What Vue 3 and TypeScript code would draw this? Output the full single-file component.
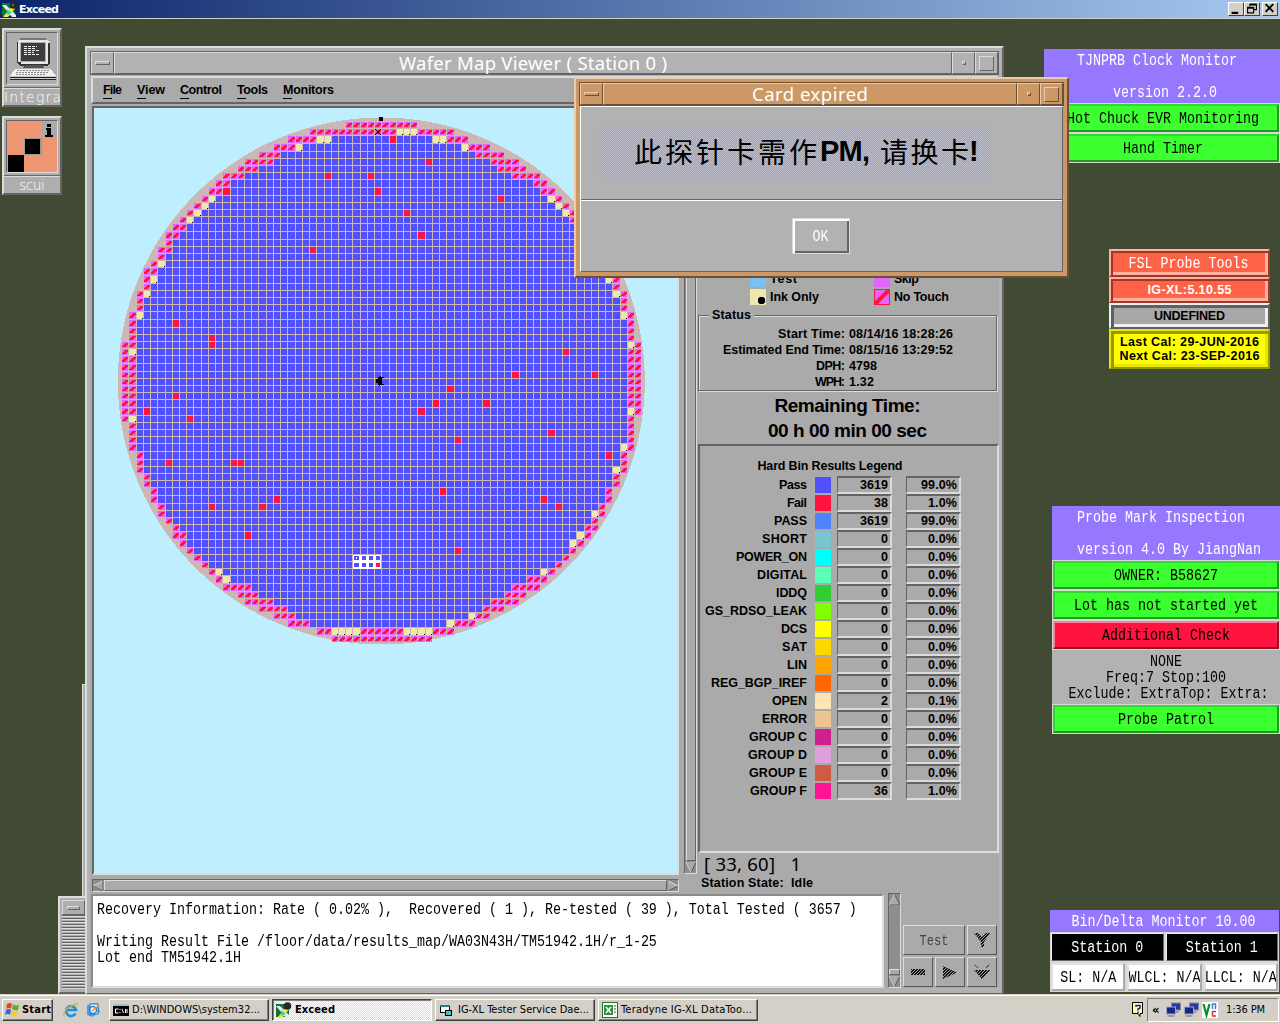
<script setup lang="ts">
type Run = [number, number]
interface Bin { name: string; w: number; color: string; count: string; pct: string }

// Stretches a label to the advance width of the bitmap font it stands for.
function fit(el: HTMLElement, width: number) {
  el.style.letterSpacing = '0px'
  el.style.display = 'inline-block'
  el.style.whiteSpace = 'pre'
  const natural = el.getBoundingClientRect().width
  const n = (el.textContent ?? '').length
  if (!n) return
  const gap = (width - natural) / Math.max(1, n - 1)
  el.style.letterSpacing = gap + 'px'
  el.style.marginRight = -gap + 'px'
}
const vFit = { mounted: (el: HTMLElement, b: { value: number }) => fit(el, b.value) }

const colLine = (i: number) => Math.floor(128.97 + 7.2235 * i)
const rowStep = [0, 7, 14, 21, 28, 36]
const rowLine = (j: number) => {
  const k = Math.floor((j - 3) / 6)
  return 151 + 44 * k + rowStep[j - 3 - 6 * k]
}

// left no-touch run | left ink dies | right ink dies | right no-touch run
const edges: string[] = [
  '31-40||| ', '26-37|38,39,40||41-45', '23-26|27,28|43,44|45-47', '21-23|24|47|48-50', '19-21|||49-52',
  '17-20|||51-54', '16-18|||52-55', '14-16|||54-57', '13-14|||57-58', '12-13|||58-59',
  '11-11|12|59|60-60', '10-10|11|60|61-61', '9-9|10|61|62-62', '8-8|9||62-63', '7-8|||63-64',
  '6-7|||64-65', '6-6|||65-65', '5-6|||65-66', '5-5|||66-66', '4-4|5|66|67-67',
  '3-4|||67-68', '3-3|4|67|68-68', '3-3|||68-68', '2-2|3|68|69-69', '2-2|||69-69',
  '2-2|||69-69', '1-1|2|69|70-70', '1-1|||70-70', '1-1|||70-70', '1-1|||70-70',
  '0-1||70|71-71', '0-0|1||70-71', '0-1|||70-71', '0-1|||70-71', '0-1|||70-71',
  '0-1|||70-71', '0-1|||70-71', '0-1|||70-71', '0-1|||70-71', '0-1||70|71-71',
  '0-0|1||70-70', '1-1|||70-70', '1-1|||70-70', '1-1|||70-70', '1-1||69|70-70',
  '2-2|||69-69', '2-2|||69-69', '2-2||68|69-69', '3-3|||68-68', '3-3|||68-68',
  '4-4|||67-67', '4-4|||67-67', '5-5|||66-66', '5-5||65|66-66', '6-6|||65-65',
  '7-7|||64-65', '7-8||63|64-64', '8-8||62|63-63', '9-9|||62-62', '10-10|||61-61',
  '11-11|||60-60', '12-12|13|58|59-59', '13-13|14||56-58', '14-17|||54-57', '16-18|||53-55',
  '17-20|||51-54', '19-22|||50-52', '21-23||48|49-50', '23-25||45|46-48',
  '27-28|29,30,31,32|39,40,41,42|43-45', '29-42||| ',
]
const fails: Run[] = [
  [37, 2], [42, 5], [28, 7], [34, 7], [14, 9], [35, 9], [52, 10], [39, 12], [41, 15], [26, 17], [7, 27],
  [12, 29], [12, 30], [61, 31], [54, 34], [65, 34], [45, 36], [7, 37], [43, 38], [50, 38], [3, 39], [41, 39],
  [9, 40], [59, 42], [46, 43], [67, 45], [6, 46], [15, 46], [16, 46], [44, 50], [21, 51], [58, 51],
  [12, 52], [19, 52], [60, 52], [17, 56], [46, 58], [35, 60],
]
const failSet = new Set(fails.map(([c, r]) => c + ',' + r))
const range = (s: string) => {
  const t = s.trim()
  if (!t) return []
  const [a, b] = t.split('-').map(Number)
  return Array.from({ length: b - a + 1 }, (_, k) => a + k)
}
const list = (s: string) => (s.trim() ? s.split(',').map(Number) : [])

let passPath = ''
let failPath = ''
let ntPath = ''
let slashPath = ''
let inkPath = ''
let dotPath = ''
const rect = (x: number, y: number, w: number, h: number) => `M${x} ${y}h${w}v${h}h${-w}z`
edges.forEach((spec, j) => {
  const [l, li, ri, r] = spec.split('|')
  const nt = [...range(l), ...range(r)]
  if (j === 69) nt.push(...range('33-38'))
  const ink = [...list(li), ...list(ri)]
  const last = r.trim() ? Math.max(...range(r)) : Math.max(...range(l))
  const y = rowLine(j - 1) + 1
  const h = rowLine(j) - y
  for (let i = range(l)[0]; i <= last; i++) {
    const x = colLine(i - 1) + 1
    const w = colLine(i) - x
    if (nt.includes(i)) {
      ntPath += rect(x, y, w, h)
      slashPath += `M${x} ${y + h - 2}l${w - 3} ${-h + 3}h3v1l${-w + 3} ${h - 3}h-3z`
    } else if (ink.includes(i)) {
      inkPath += rect(x, y, w, h)
      dotPath += rect(x + w - 1, y + h - 1, 1, 1)
    } else if (failSet.has(i + ',' + j)) {
      failPath += rect(x, y, w, h)
    } else {
      passPath += rect(x, y, w, h)
    }
  }
})
const siteCells = [59, 60].flatMap(r => [32, 33, 34, 35].map(c => ({
  x: colLine(c - 1) + 2,
  y: rowLine(r - 1) + 2,
  w: colLine(c) - colLine(c - 1) - 3,
  h: rowLine(r) - rowLine(r - 1) - 3,
  fill: failSet.has(c + ',' + r) ? '#ff1440' : '#5050ff',
})))

const bins: Bin[] = [
  { name: 'Pass', w: 28, color: '#5050ff', count: '3619', pct: '99.0%' },
  { name: 'Fail', w: 20, color: '#ff1440', count: '38', pct: '1.0%' },
  { name: 'PASS', w: 33, color: '#5084ff', count: '3619', pct: '99.0%' },
  { name: 'SHORT', w: 45, color: '#7ac5cd', count: '0', pct: '0.0%' },
  { name: 'POWER_ON', w: 71, color: '#00ffff', count: '0', pct: '0.0%' },
  { name: 'DIGITAL', w: 50, color: '#5cffb8', count: '0', pct: '0.0%' },
  { name: 'IDDQ', w: 31, color: '#32cd32', count: '0', pct: '0.0%' },
  { name: 'GS_RDSO_LEAK', w: 102, color: '#7fff00', count: '0', pct: '0.0%' },
  { name: 'DCS', w: 26, color: '#ffff00', count: '0', pct: '0.0%' },
  { name: 'SAT', w: 25, color: '#ffd700', count: '0', pct: '0.0%' },
  { name: 'LIN', w: 20, color: '#ffa500', count: '0', pct: '0.0%' },
  { name: 'REG_BGP_IREF', w: 96, color: '#ff6600', count: '0', pct: '0.0%' },
  { name: 'OPEN', w: 35, color: '#ffe4b5', count: '2', pct: '0.1%' },
  { name: 'ERROR', w: 45, color: '#eec591', count: '0', pct: '0.0%' },
  { name: 'GROUP C', w: 58, color: '#d02090', count: '0', pct: '0.0%' },
  { name: 'GROUP D', w: 59, color: '#dda0dd', count: '0', pct: '0.0%' },
  { name: 'GROUP E', w: 58, color: '#cd5b45', count: '0', pct: '0.0%' },
  { name: 'GROUP F', w: 57, color: '#ff1493', count: '36', pct: '1.0%' },
]
const digitsW = (s: string) => [...s].reduce((a, c) => a + (c === '.' ? 4 : c === '%' ? 11 : 7), 0)

const menus = [
  { label: 'File', w: 19 }, { label: 'View', w: 28 }, { label: 'Control', w: 42 },
  { label: 'Tools', w: 31 }, { label: 'Monitors', w: 51 },
]
const status = [
  { k: 'Start Time:', kw: 67, v: '08/14/16 18:28:26', vw: 104 },
  { k: 'Estimated End Time:', kw: 122, v: '08/15/16 13:29:52', vw: 104 },
  { k: 'DPH:', kw: 29, v: '4798', vw: 28 },
  { k: 'WPH:', kw: 30, v: '1.32', vw: 25 },
]
const coordText = '[ 33, 60]   1'
const stateText = 'Station State:  Idle'
const logLines = [
  'Recovery Information: Rate ( 0.02% ),  Recovered ( 1 ), Re-tested ( 39 ), Total Tested ( 3657 )',
  '',
  'Writing Result File /floor/data/results_map/WA03N43H/TM51942.1H/r_1-25',
  'Lot end TM51942.1H',
]
</script>

<template>
  <div class="desktop">
    <header class="xbar">
      <svg class="xicon" viewBox="0 0 16 16"><rect x="0" y="2" width="13" height="13" fill="#087830"/><path d="M0 4l4 0 10 10v2h-4z" fill="#e8e8f0"/><path d="M1 16l6-7 4-5 3 2-8 10z" fill="#ffe830"/><path d="M5 8l5 4-5 2z" fill="#28d0e8"/><circle cx="11.5" cy="4" r="3.8" fill="#282828"/><path d="M10 3h2v2h-2z" fill="#606060"/></svg>
      <b v-fit="40">Exceed</b>
      <span class="grow"></span>
      <div class="wbtns">
        <i><svg viewBox="0 0 12 10"><path d="M2 8h6v2H2z"/></svg></i>
        <i><svg viewBox="0 0 12 10"><path d="M4 1h6v5H8M4 1v2M4 1.8h6M2 4h5.500v5H2zM2 4.800h5" fill="none" stroke="#000"/></svg></i>
        <i class="cl"><svg viewBox="0 0 12 10"><path d="M2 1l7 7M9 1L2 8" stroke="#000" stroke-width="1.700"/></svg></i>
      </div>
    </header>

    <div class="dicon first">
      <div class="pic"><div class="well">
        <svg viewBox="0 0 50 50" width="50" height="50" shape-rendering="crispEdges">
          <rect x="9" y="6" width="33" height="25" rx="4" fill="#e8e8e8"/><path d="M12 4h26v2H12z" fill="#777"/><path d="M9 8h1v20h3v2h27V9h2v20l-3 3H12l-3-3z" fill="#333"/>
          <rect x="12" y="8" width="26" height="20" fill="#b0b0b0"/><rect x="13" y="9" width="24" height="18" fill="#3c3c3c"/>
          <path d="M16 12h13M16 14h12M16 16h15M16 18h10M16 20h15" stroke="#f0f0f0" stroke-dasharray="3 1"/>
          <path d="M17 31h17l2 3H14z" fill="#555"/><path d="M7 35h36l5 7H2z" fill="#f0f0f0"/><path d="M9 36h33M8 38h33M8 40h30" stroke="#888" stroke-dasharray="2 1"/><path d="M2 42h46v3H2z" fill="#c8c8c8"/><path d="M2 43h46M2 45h46" stroke="#222"/>
        </svg>
      </div></div>
      <div class="cap"><span v-fit="57">Integra</span></div>
    </div>
    <div class="dicon second">
      <div class="pic"><div class="well">
        <svg viewBox="0 0 50 50" width="50" height="50" shape-rendering="crispEdges">
          <rect width="50" height="50" fill="#ee9572"/><rect x="33" width="17" height="16" fill="#aaa"/><rect x="16" y="16" width="18" height="17" fill="#999"/><rect x="17" y="17" width="15" height="15"/><rect x="0" y="33" width="16" height="17" fill="#000"/>
          <path d="M39 2h4v3h-4zM38 6h5v7h2v2h-8v-2h2V8h-1z"/>
        </svg>
      </div></div>
      <div class="cap"><span v-fit="26">scui</span></div>
    </div>

    <div class="behind"></div>
    <div class="iconbox"><div class="ibtn"><i></i></div><div class="stripes"></div></div>

    <section class="win main">
      <div class="title">
        <div class="tb"><i class="dash"></i></div>
        <div class="tt"><span v-fit="268">Wafer Map Viewer ( Station 0 )</span></div>
        <div class="tb"><i class="dot"></i></div>
        <div class="tb"><i class="sq"></i></div>
      </div>
      <nav class="menu">
        <span v-for="m in menus" :key="m.label"><b v-fit="m.w">{{ m.label }}</b><i></i></span>
      </nav>
      <div class="upper">
        <div class="leftcol">
          <div class="canvas">
            <svg viewBox="94 108 583 765" width="583" height="765" shape-rendering="crispEdges">
              <circle cx="381.3" cy="381" r="263.500" fill="#cdb7b5"/>
              <path :d="passPath" fill="#5050ff"/>
              <path :d="failPath" fill="#ff1440"/>
              <path :d="ntPath" fill="#e066ff"/>
              <path :d="slashPath" fill="#ff1440"/>
              <path :d="inkPath" fill="#eee8aa"/>
              <path :d="dotPath" fill="#000"/>
              <rect x="353" y="555" width="28" height="14" fill="#fff"/>
              <rect v-for="(s, k) in siteCells" :key="k" :x="s.x" :y="s.y" :width="s.w" :height="s.h" :fill="s.fill"/>
              <rect x="356" y="557" width="1" height="2" fill="#fff"/>
              <rect x="379" y="117" width="4" height="4"/>
              <path d="M375 129l6 6M381 129l-6 6" stroke="#000"/>
              <path d="M378 377h2v-1h1v1h3v1h-2v6h2v1h-4v1h-1v-1h-1v-2h-2v-4h2z"/>
            </svg>
          </div>
          <div class="hscroll"><svg width="10" height="10" viewBox="0 0 10 10"><path d="M10 0L0 5l10 5" fill="#aaa" stroke="#ddd"/><path d="M0 5l10 5V0" fill="none" stroke="#555"/></svg><div class="bar"></div><svg width="10" height="10" viewBox="0 0 10 10"><path d="M0 0v10l10-5" fill="#aaa" stroke="#555"/><path d="M0 10V0l10 5" fill="none" stroke="#ddd"/></svg></div>
        </div>
        <div class="vscroll"><div class="bar"></div><svg width="10" height="11" viewBox="0 0 10 11"><path d="M0 0h10L5 11z" fill="#aaa" stroke="#555"/><path d="M10 0H0l5 11" fill="none" stroke="#ddd"/></svg></div>
        <div class="pane">
          <div class="keys">
            <div class="k1"><i class="test"></i><b v-fit="27">Test</b></div><div><i class="skip"></i><b v-fit="25">Skip</b></div>
            <div class="k1"><i class="ink"></i><b v-fit="49">Ink Only</b></div><div><i class="nt"><svg width="16" height="16" viewBox="0 0 16 16"><rect x=".5" y=".5" width="15" height="15" fill="#e066ff" stroke="#ff1440"/><path d="M1 15L15 1" stroke="#ff1440" stroke-width="4"/></svg></i><b v-fit="55">No Touch</b></div>
          </div>
          <div class="status">
            <b class="lg"><span v-fit="39">Status</span></b>
            <div v-for="s in status" :key="s.k" class="st"><div class="sk"><b v-fit="s.kw">{{ s.k }}</b></div><b v-fit="s.vw">{{ s.v }}</b></div>
          </div>
          <div class="remain"><div><span v-fit="146">Remaining Time:</span></div><div><span v-fit="159">00 h 00 min 00 sec</span></div></div>
          <div class="legend">
            <div class="lh"><b v-fit="145">Hard Bin Results Legend</b></div>
            <div v-for="b in bins" :key="b.name" class="bin">
              <div class="bn"><b v-fit="b.w">{{ b.name }}</b></div>
              <i :style="{ background: b.color }"></i>
              <div class="bx"><b v-fit="digitsW(b.count)">{{ b.count }}</b></div>
              <div class="bx p"><b v-fit="digitsW(b.pct)">{{ b.pct }}</b></div>
            </div>
          </div>
          <div class="coord"><span v-fit="97">{{ coordText }}</span></div>
          <div class="state"><b v-fit="112">{{ stateText }}</b></div>
        </div>
      </div>
      <div class="lower">
        <div class="log"><div v-for="(l, k) in logLines" :key="k" class="ll"><span class="mono">{{ l }}</span></div></div>
        <div class="lscroll"><svg width="11" height="11" viewBox="0 0 11 11"><path d="M0 11h11L5.500 0z" fill="#aaa" stroke="#555"/><path d="M0 11L5.500 0" stroke="#ddd"/></svg><span class="grow"></span><div class="thumb"></div><svg width="11" height="11" viewBox="0 0 11 11"><path d="M0 0h11L5.500 11z" fill="#aaa" stroke="#555"/><path d="M11 0H0l5.500 11" fill="none" stroke="#ddd"/></svg></div>
        <div class="ctl">
          <div class="cb wide"><span class="mono hatch">Test</span></div>
          <div class="cb"><svg width="16" height="14" class="hat"><path d="M0 0h4l4 4 4-4h4l-6 9v5H7V9z"/></svg></div>
          <div class="cb"><svg width="14" height="6" class="hat"><path d="M0 0h14v6H0z"/></svg></div>
          <div class="cb"><svg width="14" height="13" class="hat"><path d="M0 0l14 6.500L0 13z"/></svg></div>
          <div class="cb"><svg width="16" height="16" class="hat"><path d="M0 0l4 3-1 1zM16 0l-4 3 1 1zM0 6h16l-8 9z"/></svg></div>
        </div>
      </div>
    </section>

    <section class="clock">
      <div class="violet"><span class="mono">TJNPRB Clock Monitor</span><span class="mono r2">version 2.2.0</span></div>
      <div class="gb"><span class="mono">Hot Chuck EVR Monitoring</span></div>
      <div class="gb"><span class="mono">Hand Timer</span></div>
    </section>

    <section class="probe">
      <div class="pb red a"><span class="mono">FSL Probe Tools</span></div>
      <div class="pb red b"><b v-fit="84">IG-XL:5.10.55</b></div>
      <div class="pb gray"><b v-fit="71">UNDEFINED</b></div>
      <div class="pb yel"><b v-fit="139">Last Cal: 29-JUN-2016</b><b v-fit="140">Next Cal: 23-SEP-2016</b></div>
    </section>

    <section class="mark">
      <div class="violet"><span class="mono">Probe Mark Inspection</span><span class="mono">version 4.0 By JiangNan</span></div>
      <div class="gb"><span class="mono">OWNER: B58627</span></div>
      <div class="gb"><span class="mono">Lot has not started yet</span></div>
      <div class="gb crit"><span class="mono">Additional Check</span></div>
      <div class="info"><span class="mono">NONE</span><span class="mono">Freq:7 Stop:100</span><span class="mono ex">Exclude: ExtraTop: Extra:</span></div>
      <div class="gb"><span class="mono">Probe Patrol</span></div>
    </section>

    <section class="delta">
      <div class="dt"><span class="mono">Bin/Delta Monitor 10.00</span></div>
      <div class="drow"><div class="blk"><span class="mono">Station 0</span></div><div class="blk"><span class="mono">Station 1</span></div></div>
      <div class="drow"><div class="wh"><span class="mono">SL: N/A</span></div><div class="wh"><span class="mono">WLCL: N/A</span></div><div class="wh"><span class="mono">LLCL: N/A</span></div></div>
    </section>

    <section class="win dlg">
      <div class="title">
        <div class="tb"><i class="dash"></i></div>
        <div class="tt"><span v-fit="116">Card expired</span></div>
        <div class="tb"><i class="dot"></i></div>
        <div class="tb"><i class="sq"></i></div>
      </div>
      <div class="body">
        <div class="msgbox"><div class="dither">
          <span class="cj" v-fit="183">此探针卡需作</span><span class="pm" v-fit="50">PM,</span><span class="cj c2" v-fit="89">请换卡</span><span class="ex2">!</span>
        </div></div>
        <div class="okrow"><div class="ok"><span class="mono">OK</span></div></div>
      </div>
    </section>

    <footer class="task">
      <div class="tk start"><svg width="16" height="16" viewBox="0 0 16 16"><path d="M2 2q3-2 5 0L6 7Q4 5 1 7z" fill="#e84820"/><path d="M8 2.500q3 2 6 0L13 8q-3 1-6-1z" fill="#58b030"/><path d="M1 8q3-2 5 0l-1 5q-2-2-5 0z" fill="#3868d8"/><path d="M7 8.500q3 2 6 0L11.500 14q-3 1-5.500-1z" fill="#f8c820"/></svg><b v-fit="29">Start</b></div>
      <svg class="ie" width="16" height="16" viewBox="0 0 16 16"><path d="M12.500 11.500A5 5 0 1 1 13 8H4" fill="none" stroke="#2090e0" stroke-width="2.600"/><path d="M1 14Q0 9 8 4q7-4 7-1" fill="none" stroke="#f0b020" stroke-width="1.300"/></svg>
      <svg class="oe" width="16" height="16" viewBox="0 0 16 16"><path d="M2 3l10-2 3 9-8 5-5-2z" fill="#48a0e8"/><rect x="5" y="2" width="8" height="10" fill="#f4f8ff" stroke="#2070c0"/><circle cx="8" cy="8" r="3.500" fill="none" stroke="#2888d8" stroke-width="1.500"/><path d="M7 9l6-5" stroke="#e08820" stroke-width="1.500"/></svg>
      <div class="tk t1"><svg width="16" height="16" viewBox="0 0 16 16"><rect x="0" y="2" width="16" height="12" fill="#000"/><path d="M0 2h16v2H0z" fill="#a8b8d8"/><path d="M5.500 7H2.500v4h3M7 7v1M7 10v1M9 7l1.500 4M12.500 7v4M14 7v4" stroke="#fff" fill="none"/></svg><span v-fit="128">D:\WINDOWS\system32...</span></div>
      <div class="tk on"><svg width="16" height="16" viewBox="0 0 16 16"><rect x="0" y="2" width="13" height="13" fill="#087830"/><path d="M0 4l4 0 10 10v2h-4z" fill="#e8e8f0"/><path d="M1 16l6-7 4-5 3 2-8 10z" fill="#ffe830"/><path d="M5 8l5 4-5 2z" fill="#28d0e8"/><circle cx="11.500" cy="4" r="3.800" fill="#282828"/></svg><b v-fit="40">Exceed</b></div>
      <div class="tk"><svg width="16" height="16" viewBox="0 0 16 16"><rect x="1.500" y="3.500" width="9" height="7" fill="#fff" stroke="#000"/><path d="M1 3h10v2H1z" fill="#208080"/><rect x="6.500" y="8.500" width="6" height="5" fill="#40c0d0" stroke="#000"/></svg><span v-fit="131">IG-XL Tester Service Dae...</span></div>
      <div class="tk"><svg width="16" height="16" viewBox="0 0 16 16"><rect x=".5" y=".5" width="15" height="15" fill="#fff" stroke="#207030"/><rect x="2" y="3" width="9" height="10" fill="#309040"/><path d="M4 5l5 6M9 5l-5 6" stroke="#fff" stroke-width="1.500"/><path d="M12 4h2M12 7h2M12 10h2" stroke="#207030"/></svg><span v-fit="131">Teradyne IG-XL DataToo...</span></div>
      <span class="grow"></span>
      <svg class="hp" width="12" height="15" viewBox="0 0 12 15"><path d="M.5.5h10v11H8v3l-2-3H.5z" fill="#ffffa0" stroke="#000"/><path d="M4 5V3.500h4V6L6 7v1.500M6 9.500v1.500" stroke="#1020a0" stroke-width="1.500" fill="none"/></svg>
      <div class="tray">
        <b class="chev">«</b>
        <svg v-for="n in 2" :key="n" width="18" height="16" viewBox="0 0 17 16"><rect x="6" y="1" width="9" height="7" fill="#2838a0" stroke="#889" /><path d="M8 9h5v2H8z" fill="#99a"/><rect x="1" y="5" width="9" height="7" fill="#182880" stroke="#a0a8c8"/><path d="M2 13h7v2H2z" fill="#99a"/></svg>
        <svg class="vnc" width="16" height="16" viewBox="0 0 16 16"><rect width="16" height="16" fill="#fff"/><path d="M1.500 2l3 11 3-11" fill="none" stroke="#089020" stroke-width="2.200"/><path d="M10.500 7V2h3v5" fill="none" stroke="#3080e0" stroke-width="1.500"/><path d="M14 9.500h-3.500v4.500H14" fill="none" stroke="#e03030" stroke-width="1.500"/></svg>
        <span class="time" v-fit="39">1:36 PM</span>
      </div>
    </footer>
  </div>
</template>

<style>
body { overflow: hidden; }
</style>
<style scoped>
* { box-sizing: border-box; }
i { font-style: normal; display: block; }
svg { display: block; flex: none; }
.grow { flex: 1; }
.desktop { position: relative; width: 1280px; height: 1024px; overflow: hidden; background: #414b34; font: 12.500px/16px "Liberation Sans", Arial, sans-serif; color: #000; }
.mono { display: block; font: 13.330px/12px "Liberation Mono", "Courier New", monospace; margin: 3px 0 1px; transform: scaleY(1.280); white-space: pre; }
.xbar { display: flex; height: 19px; background: linear-gradient(90deg, #0a246a, #a6caf0); border-bottom: 1px solid #d4d0c8; align-items: center; color: #fff; padding-left: 2px; }
.xicon { width: 16px; height: 16px; margin-right: 1px; }
.xbar b { font: bold 11px "DejaVu Sans", sans-serif; }
.wbtns { display: flex; padding-right: 2px; }
.wbtns i { width: 16px; height: 14px; background: #d4d0c8; border: 1px solid; border-color: #fff #404040 #404040 #fff; }
.wbtns svg { width: 14px; height: 11px; }
.wbtns .cl { margin-left: 2px; }

.dicon { position: absolute; left: 2px; width: 60px; height: 79px; background: #aeaeae; border: 2px solid; border-color: #dcdcdc #646464 #646464 #dcdcdc; display: flex; flex-direction: column; }
.first { top: 28px; }
.second { top: 116px; }
.pic { height: 58px; padding: 2px; border-bottom: 1px solid #646464; }
.well { border: 1px solid; border-color: #646464 #dcdcdc #dcdcdc #646464; padding: 1px; height: 53px; overflow: hidden; }
.cap { border-top: 1px solid #dcdcdc; flex: 1; color: #fff; font: 200 14px/16px "DejaVu Sans", sans-serif; text-align: center; overflow: hidden; white-space: nowrap; }

.behind { position: absolute; left: 82px; top: 684px; width: 4px; height: 214px; background: #aeaeae; border-left: 1px solid #dcdcdc; border-top: 1px solid #dcdcdc; }
.iconbox { position: absolute; left: 58px; top: 896px; width: 28px; height: 98px; background: #aeaeae; border: 2px solid #dcdcdc; border-right: 0; padding: 2px 1px 3px 2px; display: flex; flex-direction: column; border-bottom-color: #646464; }
.ibtn { height: 15px; border: 1px solid; border-color: #dcdcdc #646464 #646464 #dcdcdc; display: grid; place-items: center; }
.ibtn i { width: 13px; height: 4px; border: 1px solid; border-color: #dcdcdc #646464 #646464 #dcdcdc; }
.stripes { flex: 1; background: repeating-linear-gradient(#646464 0 1px, #dcdcdc 1px 2px, #aeaeae 2px 3px); }

.win { --f: #b2b2b2; --l: #dcdcdc; --d: #646464; position: absolute; background: var(--f); border: 2px solid; border-color: var(--l) var(--d) var(--d) var(--l); display: flex; flex-direction: column; }
.main { left: 85px; top: 46px; width: 919px; height: 949px; padding: 3px 3px 5px; }
.title { display: flex; height: 24px; border: 1px solid var(--d); margin-bottom: 1px; }
.tb { width: 23px; border: 1px solid; border-color: var(--l) var(--d) var(--d) var(--l); display: grid; place-items: center; }
.tt { flex: 1; border: 1px solid; border-color: var(--l) var(--d) var(--d) var(--l); color: #fff; text-align: center; font: 18.500px/20px "Noto Sans", sans-serif; }
.dash { width: 15px; height: 4px; border: 1px solid; border-color: var(--l) var(--d) var(--d) var(--l); }
.dot { width: 4px; height: 4px; border: 1px solid; border-color: var(--l) var(--d) var(--d) var(--l); }
.sq { width: 15px; height: 15px; border: 1px solid; border-color: var(--l) var(--d) var(--d) var(--l); }
.menu { height: 28px; margin-left: 1px; background: #aaa; border: 2px solid; border-color: #dcdcdc #646464 #646464 #dcdcdc; display: flex; gap: 15px; padding: 4px 0 0 10px; }
.menu b { line-height: 15px; }
.menu i { width: 9px; height: 1px; background: #000; }
.upper { display: flex; background: #aaa; height: 789px; padding: 2px 0 0 2px; }
.leftcol { width: 587px; }
.canvas { border: 2px solid; border-color: #646464 #dcdcdc #dcdcdc #646464; height: 769px; background: #bfefff; overflow: hidden; }
.hscroll { display: flex; align-items: center; margin-top: 4px; height: 13px; background: #8e8e8e; border: 1px solid; border-color: #646464 #dcdcdc #dcdcdc #646464; }
.hscroll .bar { flex: 1; height: 11px; margin: 0 1px; background: #aaa; border: 1px solid; border-color: #dcdcdc #646464 #646464 #dcdcdc; }
.vscroll { display: flex; flex-direction: column; align-items: center; margin: 0 0 0 5px; width: 13px; height: 768px; border: 1px solid; border-color: #646464 #dcdcdc #dcdcdc #646464; background: #8e8e8e; }
.vscroll .bar { flex: 1; width: 10px; background: #aaa; border: 1px solid; border-color: #dcdcdc #646464 #646464 #dcdcdc; margin-bottom: 1px; }
.pane { margin-left: 1px; width: 301px; }
.keys { display: grid; grid-template-columns: 124px 130px; row-gap: 2px; padding: 165px 0 0 52px; }
.keys > div { display: flex; height: 16px; gap: 4px; align-items: center; }
.keys i { width: 16px; height: 16px; }
.test { background: #7ac0f0; }
.skip { background: #e066ff; }
.ink { background: radial-gradient(circle at 11.500px 11.500px, #000 3.500px, #eee8aa 4px); }
.status { position: relative; margin-top: 10px; width: 299px; height: 76px; border: 1px solid #646464; box-shadow: inset 1px 1px #dcdcdc, 1px 1px #dcdcdc; padding-top: 10px; }
.lg { position: absolute; left: 10px; top: -9px; background: #aaa; padding: 0 3px; }
.st { display: flex; gap: 4px; height: 16px; }
.sk { width: 146px; text-align: right; }
.remain { text-align: center; font: bold 19px/25px "Liberation Sans", sans-serif; height: 53px; padding: 2px 2px 0 0; }
.legend { height: 409px; border: 2px solid; border-color: #646464 #dcdcdc #dcdcdc #646464; padding-top: 12px; }
.lh { width: 260px; text-align: center; height: 18px; line-height: 17px; }
.bin { display: flex; height: 18px; align-items: center; }
.bn { width: 107px; text-align: right; margin-right: 8px; }
.bin i { width: 16px; height: 16px; margin-right: 6px; }
.bx { width: 55px; height: 18px; border: 2px solid; border-color: #646464 #dcdcdc #dcdcdc #646464; border-width: 2px 2px 2px 1px; text-align: right; padding-right: 2px; line-height: 15px; }
.p { margin-left: 14px; }
.coord { font: 18.500px/22px "Noto Sans", sans-serif; padding: 0 0 0 6px; height: 22px; }
.state { padding-left: 3px; line-height: 17px; }
.lower { display: flex; background: #aaa; flex: 1; padding-left: 1px; }
.log { width: 793px; height: 94px; margin-top: 1px; background: #fff; border: 2px solid; border-color: #8a8a8a #dcdcdc #dcdcdc #8a8a8a; padding: 5px 0 0 4px; }
.ll { height: 16px; overflow: visible; display: flow-root; }
.lscroll { width: 13px; margin-left: 4px; height: 95px; display: flex; flex-direction: column; align-items: center; background: #8e8e8e; border: 1px solid; border-color: #646464 #dcdcdc #dcdcdc #646464; }
.thumb { width: 11px; height: 6px; background: #aaa; border: 1px solid; border-color: #dcdcdc #646464 #646464 #dcdcdc; margin-bottom: 1px; }
.ctl { display: grid; grid-template-columns: 30px 30px 30px; grid-auto-rows: 30px; gap: 2px; margin: 32px 0 0 2px; }
.cb { border: 1px solid; border-color: #dcdcdc #555 #555 #dcdcdc; display: grid; place-items: center; }
.wide { grid-column: span 2; }
.hatch { color: #444; font-size: 12px; }
.hat { fill: #111; -webkit-mask: repeating-linear-gradient(135deg, #000 0 1px, transparent 1px 2.100px); mask: repeating-linear-gradient(135deg, #000 0 1px, transparent 1px 2.100px); }

.violet { background: #9678ff; color: #fff; display: flex; flex-direction: column; align-items: center; }
.clock { position: absolute; left: 1044px; top: 49px; width: 236px; }
.clock .violet { height: 54px; padding: 3px 10px 0 0; gap: 16px; }
.clock .r2 { margin-left: 8px; margin-right: -8px; }
.gb { height: 30px; border: 3px solid; border-color: #2fd82f #229922 #229922 #2fd82f; background: #3cff30; outline: 1px solid #d8d8d8; outline-offset: -1px; display: grid; place-items: center; }
.clock .gb span { margin-left: 2px; }
.crit { background: #ff1440; border-color: #ff8098 #901028 #901028 #ff8098; }
.probe { position: absolute; left: 1109px; top: 249px; width: 161px; }
.pb { border: 2px solid; display: flex; flex-direction: column; align-items: center; justify-content: center; }
.red { background: #ff6347; color: #fff; border-color: #ffb0a0 #a03828 #a03828 #ffb0a0; box-shadow: inset 2px 2px #a03828, inset -3px -3px #ffb0a0; }
.a { height: 28px; }
.a .mono { margin-right: 2px; }
.b { height: 26px; }
.gray { height: 26px; background: #a8a8a8; border-color: #f0f0f0 #606060 #606060 #f0f0f0; box-shadow: inset 3px 3px #606060, inset -3px -3px #f0f0f0; }
.yel { height: 40px; background: #ff0; border-color: #e8e800 #989800 #989800 #e8e800; box-shadow: inset 3px 3px #989800, inset -3px -3px #e8e800; }
.yel b { line-height: 14px; }
.mark { position: absolute; left: 1052px; top: 506px; width: 228px; }
.mark .violet { height: 54px; padding: 3px 0 0 25px; align-items: flex-start; gap: 16px; }
.info { height: 54px; background: #b2b2b2; display: flex; flex-direction: column; align-items: center; padding-top: 3px; }
.ex { margin-left: 5px; }
.delta { position: absolute; left: 1050px; top: 910px; width: 229px; background: #d8d8d8; }
.dt { height: 22px; background: #9678ff; color: #fff; text-align: center; padding: 3px 2px 0 0; display: flow-root; }
.drow { display: flex; gap: 2px; padding: 1px; height: 30px; }
.drow > div { flex: 1; display: grid; place-content: center; overflow: hidden; }
.blk { background: #000; color: #fff; border: 1px solid; border-color: #eee #666 #666 #eee; }
.wh { background: #fff; border: 2px solid; border-color: #e0e0e0 #aaa #aaa #e0e0e0; }

.dlg { --f: #cc9966; --l: #ebcbab; --d: #6c5036; left: 574px; top: 77px; width: 495px; height: 201px; padding: 3px; }
.dlg .title { margin-bottom: 0; }
.body { margin: 0 1px 1px; flex: 1; display: flex; flex-direction: column; background: #b2b2b2; border: 1px solid; border-color: #fff #646464 #646464 #fff; }
.msgbox { height: 93px; border-bottom: 1px solid #646464; padding: 19px 0 0 18px; }
.dither { width: 391px; height: 54px; background: conic-gradient(#bebecb 25%, #a2a2ae 0 50%, #bebecb 0 75%, #a2a2ae 0) 0 0 / 2px 2px; padding: 8px 0 0 35px; display: flex; font-size: 28px; line-height: 34px; }
.cj { font-family: "Noto Sans CJK SC", sans-serif; font-size: 28px; font-weight: 400; }
.pm, .ex2 { font-weight: bold; font-size: 29px; }
.pm { margin-left: 3px; }
.c2 { margin-left: 10px; }
.okrow { border-top: 1px solid #fff; flex: 1; display: flex; justify-content: center; padding-top: 17px; }
.ok { width: 58px; height: 36px; border: 1px solid #d8d8d8; box-shadow: inset 2px 2px #fff, inset -2px -2px #646464; display: grid; place-items: center; color: #fff; margin-right: 2px; }

.task { position: absolute; left: 0; top: 994px; width: 1280px; height: 30px; background: #d4d0c8; border-top: 1px solid #d4d0c8; box-shadow: inset 0 1px #fff; display: flex; align-items: center; padding: 0 1px 0 2px; font: 11px "DejaVu Sans Condensed", "DejaVu Sans", sans-serif; }
.tk { flex: none; width: 160px; height: 22px; border: 1px solid; border-color: #fff #404040 #404040 #fff; box-shadow: inset -1px -1px #808080; display: flex; align-items: center; gap: 3px; padding-left: 3px; margin-right: 3px; }
.start { width: 51px; padding-left: 2px; gap: 1px; margin-right: 10px; }
.oe { margin-left: 6px; }
.t1 { margin-left: 8px; }
.on { border-color: #404040 #fff #fff #404040; box-shadow: inset 1px 1px #808080; background: conic-gradient(#fff 25%, #dedbd4 0 50%, #fff 0 75%, #dedbd4 0) 0 0 / 2px 2px; }
.hp { margin-right: 3px; }
.tray { width: 132px; height: 24px; border: 1px solid; border-color: #808080 #fff #fff #808080; display: flex; align-items: center; padding-left: 4px; }
.chev { font-size: 13px; width: 13px; }
.vnc { margin: 0 8px 0 1px; }
</style>
